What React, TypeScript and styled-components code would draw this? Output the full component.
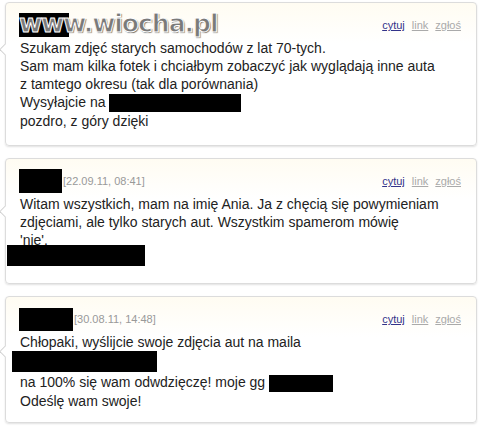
import React from 'react'
import styled, { createGlobalStyle } from 'styled-components'

const Global = createGlobalStyle`
  html, body {
    margin: 0;
    padding: 0;
    background: #fff;
    font-family: "Liberation Sans", Arial, sans-serif;
  }
`

const Page = styled.div`
  position: relative;
  width: 485px;
  height: 437px;
  padding: 2px 0 0 5px;
  box-sizing: border-box;
  display: flex;
  flex-direction: column;
  gap: 12px;
`

const Card = styled.div<{ $h: number; $notch: number }>`
  position: relative;
  width: 472px;
  height: ${(p) => p.$h}px;
  box-sizing: border-box;
  border: 1px solid #dcdcdc;
  border-radius: 4px;
  background: linear-gradient(#fffcf2, #ffffff 40px);
  box-shadow: 0 1px 2px rgba(0, 0, 0, 0.12);
  padding: 9px 14px 0 13px;

  &::before {
    content: '';
    position: absolute;
    left: -5px;
    top: ${(p) => p.$notch}px;
    width: 8px;
    height: 8px;
    background: #fff;
    border-left: 1px solid #cfcfcf;
    border-bottom: 1px solid #cfcfcf;
    transform: rotate(45deg);
  }
`

const Header = styled.div`
  display: flex;
  align-items: center;
  height: 26px;
`

const Redacted = styled.span<{ $w: number; $h?: number }>`
  display: inline-block;
  width: ${(p) => p.$w}px;
  height: ${(p) => p.$h ?? 24}px;
  background: #000;
  vertical-align: middle;
`

const Stamp = styled.span`
  font-size: 11px;
  color: #999;
  margin-left: 1px;
`

const Links = styled.div`
  margin-left: auto;
  display: flex;
  gap: 7px;
  font-size: 11px;
  padding-right: 1px;
`

const Link = styled.a<{ $main?: boolean }>`
  color: ${(p) => (p.$main ? '#33338a' : '#aaa')};
  text-decoration: underline;
`

const Body = styled.div`
  font-size: 14px;
  line-height: 18px;
  color: #222;
  padding-left: 1px;
  margin-top: 1px;
`

const Line = styled.div``

const BlockRedaction = styled.div<{ $w: number; $ml: number; $mt: number }>`
  width: ${(p) => p.$w}px;
  height: 21px;
  background: #000;
  margin-left: ${(p) => p.$ml}px;
  margin-top: ${(p) => p.$mt}px;
`

const Watermark = styled.div`
  position: absolute;
  left: 19px;
  top: 9px;
  font-family: "DejaVu Sans", sans-serif;
  font-weight: bold;
  font-size: 25px;
  letter-spacing: -1px;
  color: #7a7a7a;
  -webkit-text-stroke: 1px #fff;
  text-shadow: 1px 1px 1px rgba(0, 0, 0, 0.6);
`

const Actions = () => (
  <Links>
    <Link $main>cytuj</Link>
    <Link>link</Link>
    <Link>zgłoś</Link>
  </Links>
)

export default function App() {
  return (
    <Page>
      <Global />
      <Card $h={144} $notch={42}>
        <Header>
          <Redacted $w={50} />
          <Actions />
        </Header>
        <Body>
          <Line>Szukam zdjęć starych samochodów z lat 70-tych.</Line>
          <Line>Sam mam kilka fotek i chciałbym zobaczyć jak wyglądają inne auta</Line>
          <Line>z tamtego okresu (tak dla porównania)</Line>
          <Line>
            Wysyłajcie na <Redacted $w={132} $h={18} />
          </Line>
          <Line>pozdro, z góry dzięki</Line>
        </Body>
      </Card>

      <Card $h={126} $notch={48}>
        <Header>
          <Redacted $w={43} />
          <Stamp>[22.09.11, 08:41]</Stamp>
          <Actions />
        </Header>
        <Body>
          <Line>Witam wszystkich, mam na imię Ania. Ja z chęcią się powymieniam</Line>
          <Line>zdjęciami, ale tylko starych aut. Wszystkim spamerom mówię</Line>
          <Line>'nie'.</Line>
        </Body>
        <BlockRedaction $w={138} $ml={-12} $mt={-4} />
      </Card>

      <Card $h={127} $notch={50}>
        <Header>
          <Redacted $w={54} $h={23} />
          <Stamp>[30.08.11, 14:48]</Stamp>
          <Actions />
        </Header>
        <Body>
          <Line>Chłopaki, wyślijcie swoje zdjęcia aut na maila</Line>
        </Body>
        <BlockRedaction $w={145} $ml={-7} $mt={0} />
        <Body>
          <Line>
            na 100% się wam odwdzięczę! moje gg <Redacted $w={64} $h={17} />
          </Line>
          <Line>Odeślę wam swoje!</Line>
        </Body>
      </Card>

      <Watermark>www.wiocha.pl</Watermark>
    </Page>
  )
}
